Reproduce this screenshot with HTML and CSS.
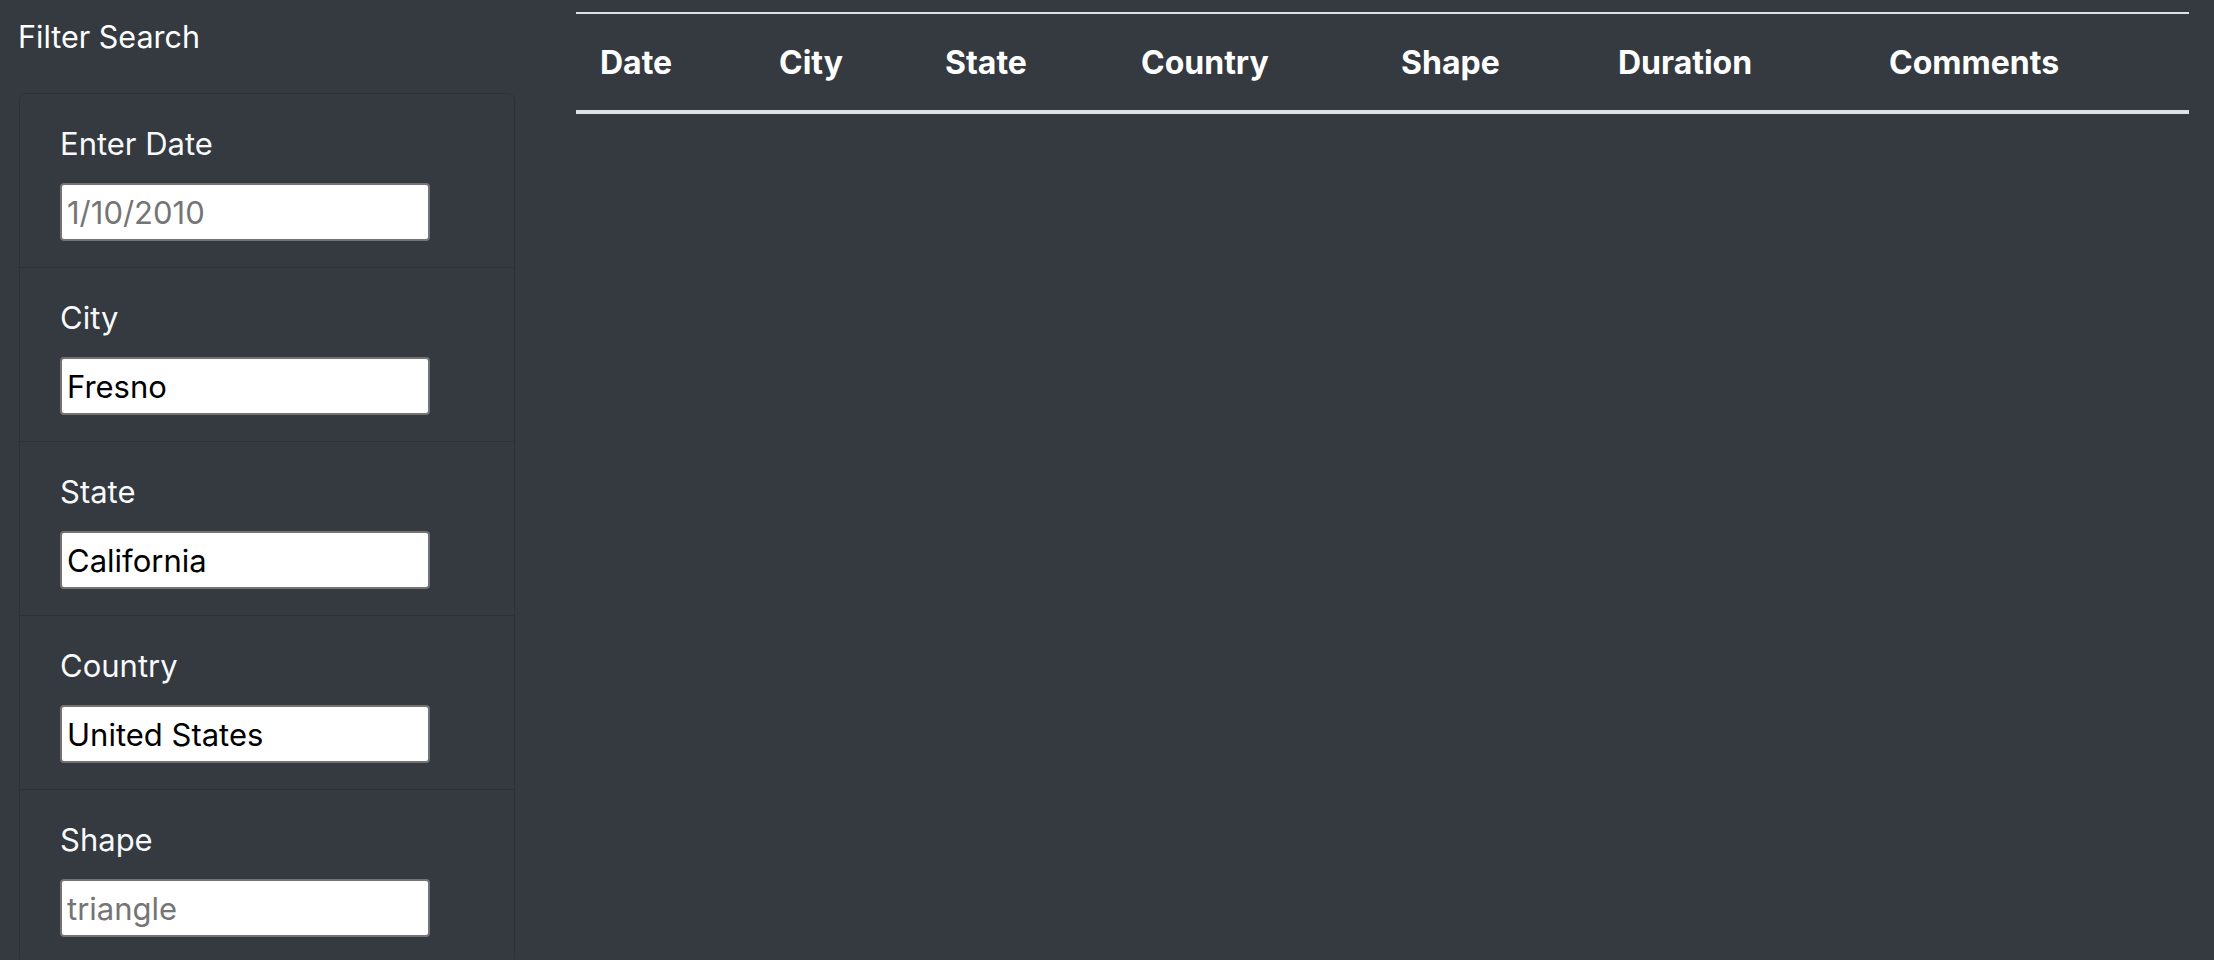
FILE: index.html
```html
<!DOCTYPE html>
<html lang="en">
<head>
<meta charset="utf-8">
<title>UFO Sightings</title>
<link rel="stylesheet" href="styles.css">
</head>
<body>
<div class="page">
  <aside class="sidebar">
    <h2 class="sidebar-title">Filter Search</h2>
    <form class="filter-card">
      <div class="filter-item">
        <label class="filter-label" for="datetime">Enter Date</label>
        <input class="filter-input" id="datetime" type="text" placeholder="1/10/2010">
      </div>
      <div class="filter-item">
        <label class="filter-label" for="city">City</label>
        <input class="filter-input" id="city" type="text" value="Fresno">
      </div>
      <div class="filter-item">
        <label class="filter-label" for="state">State</label>
        <input class="filter-input" id="state" type="text" value="California">
      </div>
      <div class="filter-item">
        <label class="filter-label" for="country">Country</label>
        <input class="filter-input" id="country" type="text" value="United States">
      </div>
      <div class="filter-item">
        <label class="filter-label" for="shape">Shape</label>
        <input class="filter-input" id="shape" type="text" placeholder="triangle">
      </div>
    </form>
  </aside>
  <main class="content">
    <table class="ufo-table">
      <colgroup>
        <col class="c-date"><col class="c-city"><col class="c-state"><col class="c-country"><col class="c-shape"><col class="c-duration"><col class="c-comments">
      </colgroup>
      <thead>
        <tr>
          <th>Date</th>
          <th>City</th>
          <th>State</th>
          <th>Country</th>
          <th>Shape</th>
          <th>Duration</th>
          <th>Comments</th>
        </tr>
      </thead>
      <tbody></tbody>
    </table>
  </main>
</div>
</body>
</html>
```

FILE: styles.css
```css
html, body {
  margin: 0;
  padding: 0;
  background: #343a40;
  overflow: hidden;
}
body {
  font-family: Inter, "Noto Sans", "Liberation Sans", sans-serif;
  color: #ffffff;
}
.page {
  display: flex;
  align-items: flex-start;
  gap: 61px;
  padding: 0 25px 0 19px;
}
.sidebar {
  width: 496px;
  flex: none;
}
.sidebar-title {
  margin: 14px 0 34px -1px;
  font-size: 30.5px;
  font-weight: 400;
  line-height: 45px;
}
.filter-card {
  margin: 0;
  border: 1px solid #2d3237;
  border-radius: 7px;
  overflow: hidden;
}
.filter-item {
  display: flex;
  flex-direction: column;
  align-items: flex-start;
  padding: 27px 40px 26px 40px;
  border-top: 1px solid #2d3237;
}
.filter-item:first-child {
  border-top: 0;
}
.filter-label {
  font-size: 31px;
  line-height: 45px;
  margin-bottom: 17px;
  color: #f8f9fa;
}
.filter-input {
  box-sizing: border-box;
  width: 370px;
  height: 58px;
  margin: 0;
  padding: 0 5px;
  font-family: Inter, "Noto Sans", "Liberation Sans", sans-serif;
  font-size: 31px;
  color: #000;
  background: #fff;
  border: 2px solid #737373;
  border-radius: 4px;
  outline: none;
}
.filter-input::placeholder {
  color: #757575;
}
.content {
  flex: 1;
  padding-top: 12px;
}
.ufo-table {
  width: 1613px;
  border-collapse: collapse;
  table-layout: fixed;
}
.c-date { width: 179px; }
.c-city { width: 166px; }
.c-state { width: 196px; }
.c-country { width: 260px; }
.c-shape { width: 217px; }
.c-duration { width: 271px; }
.c-comments { width: 324px; }
.ufo-table th {
  text-align: left;
  font-size: 32px;
  font-weight: 700;
  line-height: 45px;
  padding: 26px 24px 25px;
  border-top: 2px solid #dee2e6;
  border-bottom: 4px solid #dee2e6;
  color: #ffffff;
}
```
